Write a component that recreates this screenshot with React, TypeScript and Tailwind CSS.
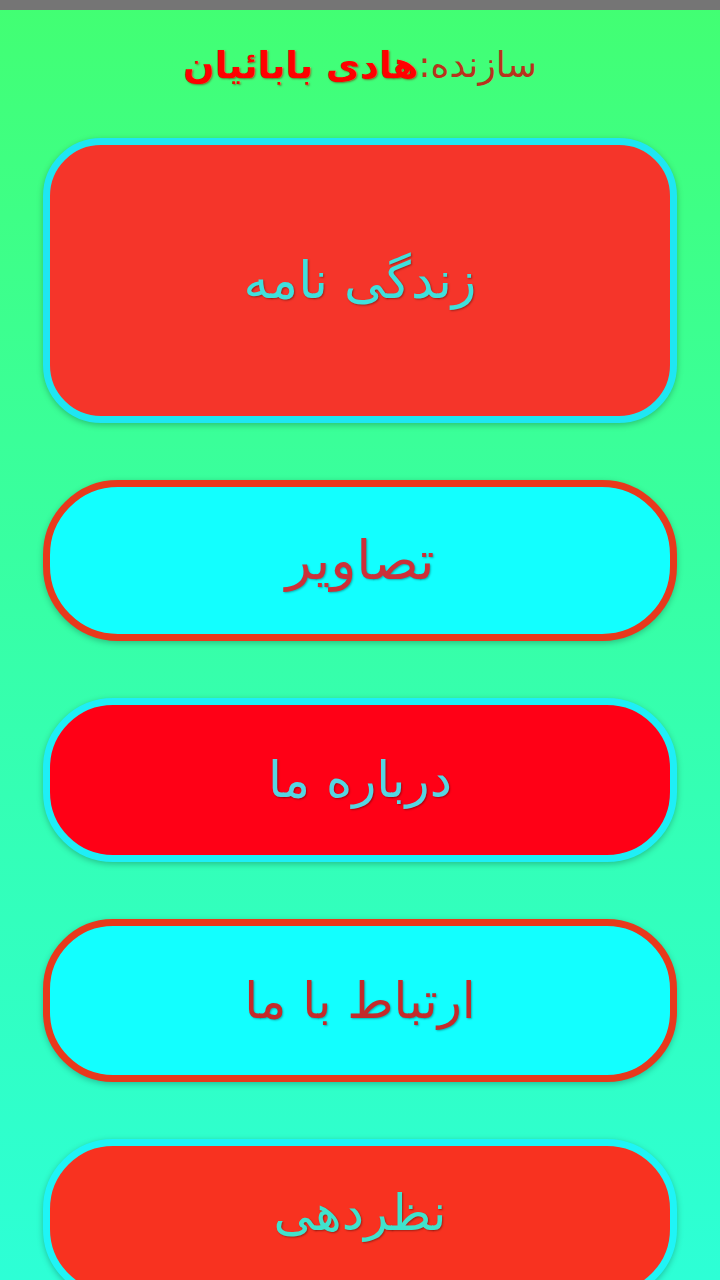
import React from "react";

const font = { fontFamily: '"DejaVu Sans", "Noto Sans", sans-serif' };

export default function App() {
  return (
    <div
      dir="rtl"
      className="w-[720px] h-[1280px] overflow-hidden flex flex-col bg-gradient-to-b from-[#42ff72] to-[#2dffd6]"
      style={font}
    >
      <div className="h-[10px] bg-[#757575] shrink-0" />
      <div className="h-[115px] shrink-0 flex items-center justify-center pb-[5px]">
        <span className="text-[36px] leading-none text-[#b8321c]">سازنده:</span>
        <span className="text-[37px] leading-none font-bold text-[#ff0000] [text-shadow:1px_1px_2px_rgba(120,40,0,0.6)]">
          هادی بابائیان
        </span>
      </div>
      <div className="flex flex-col gap-[57px] px-[43px] pt-[13px]">
        <div className="h-[285px] shrink-0 rounded-[58px] border-[7px] border-[#1fe6f2] bg-[#f5352a] flex items-center justify-center shadow-[0_2px_6px_rgba(0,0,0,0.25)]">
          <span className="text-[51px] leading-none text-[#3fe0dc] [text-shadow:1px_1px_2px_rgba(0,0,0,0.35)]">زندگی نامه</span>
        </div>
        <div className="h-[161px] shrink-0 rounded-[75px] border-[7px] border-[#e8391c] bg-[#12ffff] flex items-center justify-center shadow-[0_2px_6px_rgba(0,0,0,0.25)]">
          <span className="text-[54px] leading-none text-[#cc3038] [text-shadow:1px_1px_2px_rgba(0,0,0,0.3)]">تصاویر</span>
        </div>
        <div className="h-[164px] shrink-0 rounded-[70px] border-[7px] border-[#1feef6] bg-[#ff0016] flex items-center justify-center shadow-[0_2px_6px_rgba(0,0,0,0.25)]">
          <span className="text-[50px] leading-none text-[#55d6e2] [text-shadow:1px_1px_2px_rgba(0,0,0,0.35)]">درباره ما</span>
        </div>
        <div className="h-[163px] shrink-0 rounded-[70px] border-[7px] border-[#e8391c] bg-[#12ffff] flex items-center justify-center shadow-[0_2px_6px_rgba(0,0,0,0.25)]">
          <span className="text-[50px] leading-none text-[#c42a2a] [text-shadow:1px_1px_2px_rgba(0,0,0,0.3)]">ارتباط با ما</span>
        </div>
        <div className="h-[160px] shrink-0 rounded-[70px] border-[7px] border-[#1ff4f6] bg-[#f83220] flex items-start justify-center pt-[42px] shadow-[0_2px_6px_rgba(0,0,0,0.25)]">
          <span className="text-[50px] leading-none text-[#40e2cc] [text-shadow:1px_1px_2px_rgba(0,0,0,0.35)]">نظردهی</span>
        </div>
      </div>
    </div>
  );
}
